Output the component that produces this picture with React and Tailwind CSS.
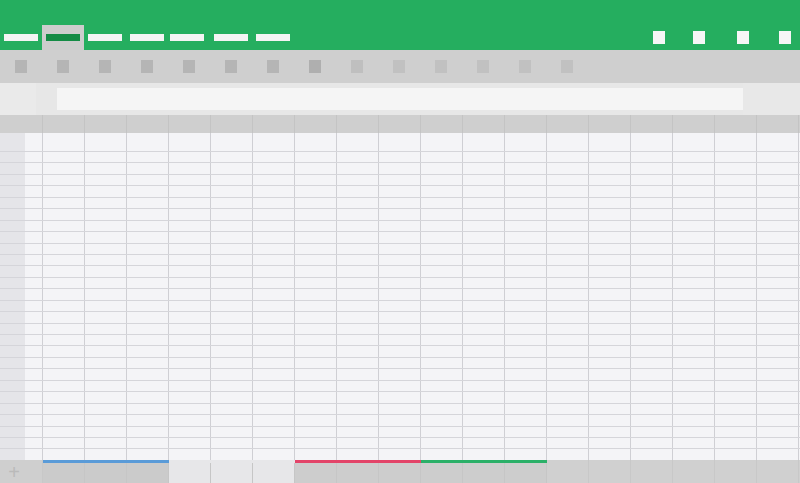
import React from "react";

const COLS = 19;

function Row({ h, last }) {
  return (
    <div className={`flex ${h ? "h-[19px] shrink-0" : "flex-1 min-h-0"} ${last ? "" : "border-b border-[#d5d5da]"}`}>
      <div className="flex w-[43px] shrink-0 border-r border-[#cfcfd4]">
        <div className="w-[25px] bg-[#e5e5e9]" />
        <div className="flex-1 bg-[#f4f4f7]" />
      </div>
      {Array.from({ length: COLS - 1 }).map((_, i) => (
        <div key={i} className="w-[42px] shrink-0 border-r border-[#cfcfd4] bg-[#f4f4f7]" />
      ))}
      <div className="flex-1 bg-[#f4f4f7]" />
    </div>
  );
}

export default function App() {
  const toolColors = [
    "#b5b5b5", "#b5b5b5", "#b5b5b5", "#b5b5b5", "#b5b5b5", "#b5b5b5", "#b5b5b5",
    "#afafaf", "#bfbfbf", "#c1c1c1", "#c1c1c1", "#c1c1c1", "#c1c1c1", "#c1c1c1",
  ];
  const bottom = [
    { bg: "#cbcbcb", line: "#5a9bd8" },
    { bg: "#cbcbcb", line: "#5a9bd8" },
    { bg: "#cbcbcb", line: "#5a9bd8" },
    { bg: "#e7e7e9", line: null },
    { bg: "#e7e7e9", line: null },
    { bg: "#e7e7e9", line: null },
    { bg: "#cdcdcd", line: "#e34469" },
    { bg: "#cdcdcd", line: "#e34469" },
    { bg: "#cdcdcd", line: "#e34469" },
    { bg: "#cdcdcd", line: "#2bb068" },
    { bg: "#cdcdcd", line: "#2bb068" },
    { bg: "#cdcdcd", line: "#2bb068" },
  ];
  return (
    <div className="w-[800px] h-[483px] flex flex-col overflow-hidden bg-[#f4f4f7] font-['Liberation_Sans',sans-serif]">
      {/* title / tabs bar */}
      <div className="h-[50px] shrink-0 bg-[#25ae5f] flex flex-col justify-end">
        <div className="h-[25px] flex items-center">
          <div className="ml-[4px] w-[34px] h-[7px] bg-[#f4f4f4]" />
          <div className="ml-[4px] w-[42px] h-[25px] bg-[#cdcdcd] flex items-center justify-center">
            <div className="w-[34px] h-[7px] bg-[#148b45]" />
          </div>
          <div className="ml-[4px] w-[34px] h-[7px] bg-[#f4f4f4]" />
          <div className="ml-[8px] w-[34px] h-[7px] bg-[#f4f4f4]" />
          <div className="ml-[6px] w-[34px] h-[7px] bg-[#f4f4f4]" />
          <div className="ml-[10px] w-[34px] h-[7px] bg-[#f4f4f4]" />
          <div className="ml-[8px] w-[34px] h-[7px] bg-[#f4f4f4]" />
          <div className="flex-1" />
          <div className="w-[12px] h-[13px] bg-[#f6f6f6]" />
          <div className="ml-[28px] w-[12px] h-[13px] bg-[#f6f6f6]" />
          <div className="ml-[32px] w-[12px] h-[13px] bg-[#f6f6f6]" />
          <div className="ml-[30px] w-[12px] h-[13px] bg-[#f6f6f6]" />
          <div className="w-[9px]" />
        </div>
      </div>

      {/* toolbar */}
      <div className="h-[33px] shrink-0 bg-[#cfcfcf] flex items-center pl-[15px] gap-[30px]">
        {toolColors.map((c, i) => (
          <div key={i} className="w-[12px] h-[13px]" style={{ backgroundColor: c }} />
        ))}
      </div>

      {/* formula bar */}
      <div className="h-[32px] shrink-0 bg-[#e7e7e7] flex items-center">
        <div className="w-[36px] h-full bg-[#eaeaea]" />
        <div className="w-[21px]" />
        <div className="w-[686px] h-[22px] bg-[#f5f5f5]" />
        <div className="flex-1 h-full bg-[#e8e8e8]" />
      </div>

      {/* column header */}
      <div className="h-[18px] shrink-0 bg-[#cfcfcf] flex">
        <div className="w-[43px] shrink-0 border-r border-[#c4c4c4]" />
        {Array.from({ length: COLS - 1 }).map((_, i) => (
          <div key={i} className="w-[42px] shrink-0 border-r border-[#c4c4c4]" />
        ))}
        <div className="flex-1" />
      </div>

      {/* grid body */}
      <div className="flex-1 min-h-0 flex flex-col">
        <Row h />
        {Array.from({ length: 27 }).map((_, i) => (
          <Row key={i} last={i === 26} />
        ))}
      </div>

      {/* sheet tabs */}
      <div className="h-[23px] shrink-0 bg-[#cfcfcf] flex">
        <div className="w-[43px] shrink-0 border-r border-[#c8c8c8] bg-[#cfcfcf] flex items-center justify-center pr-[14px] text-[#bababa] text-[20px] leading-none">
          +
        </div>
        {bottom.map((b, i) => (
          <div key={i} className="w-[42px] shrink-0 flex flex-col" style={{ backgroundColor: b.bg }}>
            <div className="h-[3px] w-full" style={{ backgroundColor: b.line || b.bg }} />
            <div className="flex-1 border-r border-[#c6c6c6]" />
          </div>
        ))}
        {Array.from({ length: 6 }).map((_, i) => (
          <div key={i} className="w-[42px] shrink-0 border-r border-[#c8c8c8] bg-[#d0d0d0]" />
        ))}
        <div className="flex-1 bg-[#d0d0d0]" />
      </div>
    </div>
  );
}
